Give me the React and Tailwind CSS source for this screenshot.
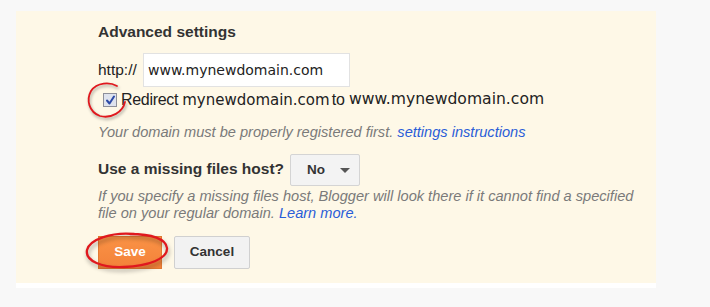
export default function App() {
  const arial = { fontFamily: '"Liberation Sans", Arial, sans-serif' };
  const dejavu = { fontFamily: '"DejaVu Sans", Verdana, sans-serif' };
  return (
    <div className="w-[710px] h-[307px] bg-[#f8f8f8] pt-[11px] pl-[16px] overflow-hidden" style={arial}>
      <div className="w-[640px] h-[272px] bg-[#fef8e7] pl-[82px] pt-[12px] flex flex-col text-[#333]">
        <div className="h-[18px] leading-[18px] text-[15.5px] font-bold text-[#333]">Advanced settings</div>

        <div className="mt-[12px] flex items-center h-[34px]">
          <span className="text-[15.5px] text-[#222] w-[45px]">http://</span>
          <div className="w-[207px] h-[34px] bg-white border border-[#e2e2e2] flex items-center pl-[4px] text-[14px] text-[#222]" style={dejavu}>
            www.mynewdomain.com
          </div>
        </div>

        <div className="mt-[3px] flex items-center h-[20px] relative">
          <div className="ml-[5px] w-[14px] h-[14px] border border-[#8e8f9a] bg-[#dfe3ee] flex items-center justify-center">
            <svg width="11" height="11" viewBox="0 0 11 11">
              <path d="M2 5.5 L4.5 8.5 L9 1.5" fill="none" stroke="#2d4aa6" strokeWidth="2" strokeLinecap="round" strokeLinejoin="round" />
            </svg>
          </div>
          <span className="ml-[4px] text-[16px] text-[#222] tracking-[-0.3px]">Redirect</span>
          <span className="ml-[4px] text-[15px] text-[#222]" style={dejavu}>mynewdomain.com</span>
          <span className="ml-[2px] text-[16px] text-[#222]">to</span>
          <span className="ml-[4px] text-[15.6px] text-[#222]" style={dejavu}>www.mynewdomain.com</span>
          <svg className="absolute left-[-14px] top-[-10px]" width="46" height="42" viewBox="0 0 46 42" style={{ filter: 'drop-shadow(1px 2px 1.5px rgba(0,0,0,0.35))' }}>
            <path d="M33 6 C26 2 13 2 7 11 C2 20 5 32 16 36 C27 39 39 32 41 22" fill="none" stroke="#e0181e" strokeWidth="1.8" strokeLinecap="round" />
          </svg>
        </div>

        <div className="mt-[13px] h-[18px] leading-[18px] text-[14.6px] italic text-[#7a7a7a]">
          Your domain must be properly registered first.{' '}
          <span className="text-[#2a5dd8]">settings instructions</span>
        </div>

        <div className="mt-[13px] flex items-center h-[32px]">
          <span className="text-[15.5px] font-bold text-[#333] mb-[3px]">Use a missing files host?</span>
          <div className="ml-[6px] w-[70px] h-[32px] bg-[#f3f3f3] border border-[#d4d4d4] rounded-[2px] flex items-center pl-[16px]">
            <span className="text-[13.5px] font-bold text-[#333]">No</span>
            <svg className="ml-[15px]" width="10" height="5" viewBox="0 0 10 5">
              <path d="M0 0 L10 0 L5 5 Z" fill="#555" />
            </svg>
          </div>
        </div>

        <div className="mt-[2px] text-[14.6px] leading-[17px] italic text-[#7a7a7a]">
          If you specify a missing files host, Blogger will look there if it cannot find a specified
          <br />
          file on your regular domain. <span className="text-[#2a5dd8]">Learn more.</span>
        </div>

        <div className="mt-[14px] flex items-center relative">
          <div className="w-[64px] h-[33px] bg-gradient-to-b from-[#fa9245] to-[#f3823a] border border-[#e27a33] flex items-center justify-center text-white text-[13.5px] font-bold">
            Save
          </div>
          <div className="ml-[12px] w-[76px] h-[33px] bg-[#f2f2f2] border border-[#d0d0d0] rounded-[2px] flex items-center justify-center text-[#333] text-[13.5px] font-bold">
            Cancel
          </div>
          <svg className="absolute left-[-14px] top-[-5px]" width="92" height="44" viewBox="0 0 92 44" style={{ filter: 'drop-shadow(1px 3px 2px rgba(0,0,0,0.35))' }}>
            <path d="M50 3 C28 1 6 8 3 19 C1 30 18 37 40 36 C64 35 84 28 83 17 C82 8 68 3 46 3" fill="none" stroke="#e0181e" strokeWidth="2.3" strokeLinecap="round" />
          </svg>
        </div>
      </div>
      <div className="w-[640px] h-[5px] bg-white" />
    </div>
  );
}
